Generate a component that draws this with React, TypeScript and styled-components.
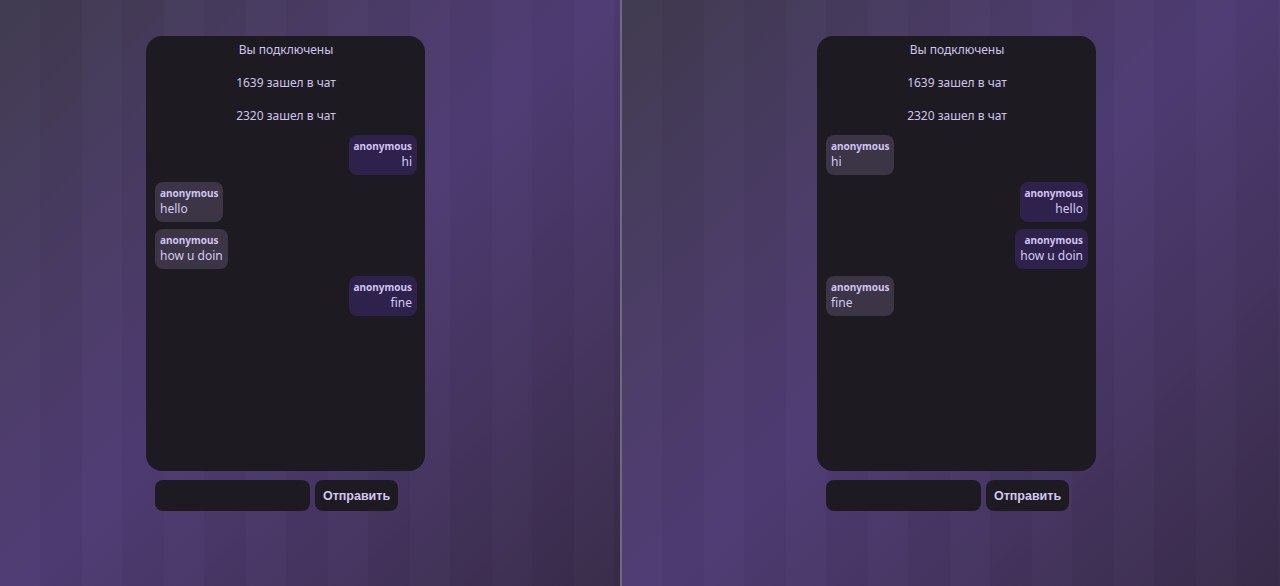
import React from "react";
import styled, { createGlobalStyle } from "styled-components";

// ----------------------------- Global -----------------------------

const GlobalStyle = createGlobalStyle`
  html, body {
    margin: 0;
    padding: 0;
    width: 1280px;
    height: 586px;
    overflow: hidden;
    background: #3d3550;
  }
  * {
    box-sizing: border-box;
  }
`;

// ----------------------------- Layout -----------------------------

const Screen = styled.div`
  display: flex;
  width: 1280px;
  height: 586px;
`;

const Window = styled.div<{ $width: number; $offset: number }>`
  position: relative;
  width: ${(p) => p.$width}px;
  height: 586px;
  padding: 36px 0 0 ${(p) => p.$offset}px;
  background: linear-gradient(135deg, #3f3a4e 0%, #4a3b66 30%, #4e3b73 50%, #44345f 75%, #382b48 100%);

  &::before {
    content: "";
    position: absolute;
    inset: 0;
    pointer-events: none;
    background: repeating-linear-gradient(
      90deg,
      rgba(255, 255, 255, 0.012) 0px,
      rgba(255, 255, 255, 0.012) 40px,
      rgba(0, 0, 0, 0.02) 40px,
      rgba(0, 0, 0, 0.02) 82px
    );
  }
`;

const Divider = styled.div`
  width: 2px;
  height: 586px;
  background: #716a7f;
`;

const Column = styled.div`
  position: relative;
  display: flex;
  flex-direction: column;
  width: 279px;
`;

// ----------------------------- Chat -----------------------------

const ChatCard = styled.div`
  display: flex;
  flex-direction: column;
  gap: 7px;
  height: 435px;
  padding: 0 8px 0 9px;
  background: #1d1b21;
  border-radius: 16px;
  font-family: "Noto Sans", "Open Sans", sans-serif;
  color: #d4c6f4;
`;

const SystemLine = styled.div`
  height: 26px;
  line-height: 28px;
  text-align: center;
  font-size: 12px;
  color: #cfc4ee;
`;

const Bubble = styled.div<{ $own: boolean }>`
  align-self: ${(p) => (p.$own ? "flex-end" : "flex-start")};
  text-align: ${(p) => (p.$own ? "right" : "left")};
  min-width: 68px;
  padding: 4px 5px;
  border-radius: 8px;
  background: ${(p) => (p.$own ? "#2e214b" : "#3b3546")};
`;

const Author = styled.div`
  font-size: 10px;
  font-weight: 700;
  line-height: 14px;
  color: #d2c3f3;
`;

const Text = styled.div`
  font-size: 12px;
  line-height: 18px;
  color: #d6c9f5;
`;

const Composer = styled.div`
  display: flex;
  gap: 5px;
  margin-top: 9px;
  padding-left: 9px;
`;

const Input = styled.input`
  width: 155px;
  height: 31px;
  border: none;
  outline: none;
  border-radius: 8px;
  background: #1d1b21;
  color: #d6c9f5;
  padding: 0 8px;
`;

const SendButton = styled.button`
  width: 83px;
  height: 31px;
  border: none;
  border-radius: 8px;
  background: #1d1b21;
  color: #d2c6f2;
  font-family: "Liberation Sans", Arial, sans-serif;
  font-weight: 700;
  font-size: 12.5px;
  padding: 0;
`;

// ----------------------------- Data -----------------------------

type Msg = { kind: "system"; text: string } | { kind: "chat"; own: boolean; text: string };

const leftMessages: Msg[] = [
  { kind: "system", text: "Вы подключены" },
  { kind: "system", text: "1639 зашел в чат" },
  { kind: "system", text: "2320 зашел в чат" },
  { kind: "chat", own: true, text: "hi" },
  { kind: "chat", own: false, text: "hello" },
  { kind: "chat", own: false, text: "how u doin" },
  { kind: "chat", own: true, text: "fine" },
];

const rightMessages: Msg[] = [
  { kind: "system", text: "Вы подключены" },
  { kind: "system", text: "1639 зашел в чат" },
  { kind: "system", text: "2320 зашел в чат" },
  { kind: "chat", own: false, text: "hi" },
  { kind: "chat", own: true, text: "hello" },
  { kind: "chat", own: true, text: "how u doin" },
  { kind: "chat", own: false, text: "fine" },
];

// ----------------------------- Components -----------------------------

const ChatWindow: React.FC<{ messages: Msg[]; width: number; offset: number }> = ({
  messages,
  width,
  offset,
}) => (
  <Window $width={width} $offset={offset}>
    <Column>
      <ChatCard>
        {messages.map((m, i) =>
          m.kind === "system" ? (
            <SystemLine key={i}>{m.text}</SystemLine>
          ) : (
            <Bubble key={i} $own={m.own}>
              <Author>anonymous</Author>
              <Text>{m.text}</Text>
            </Bubble>
          )
        )}
      </ChatCard>
      <Composer>
        <Input type="text" />
        <SendButton>Отправить</SendButton>
      </Composer>
    </Column>
  </Window>
);

export default function App() {
  return (
    <>
      <GlobalStyle />
      <Screen>
        <ChatWindow messages={leftMessages} width={620} offset={146} />
        <Divider />
        <ChatWindow messages={rightMessages} width={658} offset={195} />
      </Screen>
    </>
  );
}
